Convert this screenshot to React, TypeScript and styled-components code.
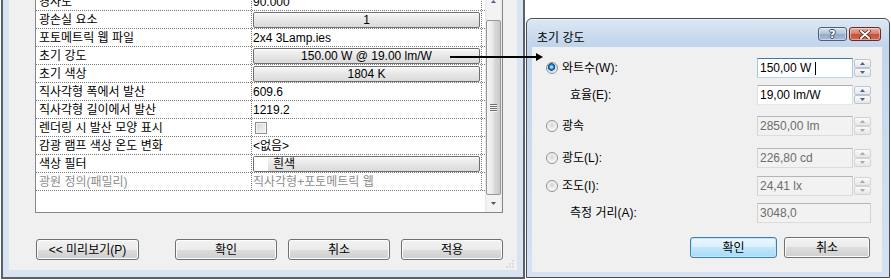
import styled, { createGlobalStyle } from "styled-components";

const GlobalStyle = createGlobalStyle`
  html, body { margin: 0; padding: 0; background: #fff; }
  body {
    font-family: "Liberation Sans", "Noto Sans CJK KR", sans-serif;
    font-size: 12px;
    color: #000;
  }
`;

type Prop = {
  name: string;
  value: string;
  kind?: "text" | "button" | "check" | "color";
  muted?: boolean;
};

const props: Prop[] = [
  { name: "경사도", value: "90.000" },
  { name: "광손실 요소", value: "1", kind: "button" },
  { name: "포토메트릭 웹 파일", value: "2x4 3Lamp.ies" },
  { name: "초기 강도", value: "150.00 W @ 19.00 lm/W", kind: "button" },
  { name: "초기 색상", value: "1804 K", kind: "button" },
  { name: "직사각형 폭에서 발산", value: "609.6" },
  { name: "직사각형 길이에서 발산", value: "1219.2" },
  { name: "렌더링 시 발산 모양 표시", value: "", kind: "check" },
  { name: "감광 램프 색상 온도 변화", value: "<없음>" },
  { name: "색상 필터", value: "흰색", kind: "color" },
  { name: "광원 정의(패밀리)", value: "직사각형+포토메트릭 웹", muted: true },
];

const Stage = styled.div`
  position: relative;
  width: 891px;
  height: 280px;
  overflow: hidden;
  display: flex;
  align-items: flex-start;
`;

/* ---------- main properties window ---------- */

const MainWindow = styled.div`
  flex: none;
  width: 524px;
  margin: -20px 0 0 1px;
  box-sizing: border-box;
  border: 2px solid #5c6067;
  border-top: none;
  padding: 0 6px 7px;
  background: #d8e4f2;
`;

const Panel = styled.div`
  position: relative;
  height: 290px;
  box-sizing: border-box;
  padding: 12px 14px 0 26px;
  background: #f0f0f0;
  display: flex;
  flex-direction: column;
`;

const Grid = styled.div`
  height: 221px;
  box-sizing: border-box;
  border: 1px solid #828790;
  background: #fff;
  display: flex;
`;

const Table = styled.div`
  flex: 1;
  display: flex;
  flex-direction: column;
`;

const Row = styled.div`
  display: grid;
  grid-template-columns: 216px 230px;
  height: 18px;
  box-sizing: border-box;
  border-bottom: 1px dotted #7a7a7a;
`;

const Cell = styled.div<{ $muted?: boolean; $pad: number }>`
  display: flex;
  align-items: center;
  box-sizing: border-box;
  padding: 0 1px 0 ${(p) => p.$pad}px;
  border-right: 1px dotted #7a7a7a;
  color: ${(p) => (p.$muted ? "#8d8d8d" : "#000")};
  line-height: 14px;
  white-space: nowrap;
  overflow: hidden;
`;

const GridButton = styled.div<{ $left?: boolean }>`
  flex: 1;
  height: 16px;
  box-sizing: border-box;
  display: flex;
  align-items: center;
  justify-content: ${(p) => (p.$left ? "flex-start" : "center")};
  border: 1px solid #6f6f6f;
  border-radius: 2px;
  background: linear-gradient(#f6f6f6, #e7e7e7 50%, #dadada);
  box-shadow: inset 0 1px 0 #fff;
  overflow: hidden;
`;

const Swatch = styled.span`
  width: 14px;
  align-self: stretch;
  background: #fff;
  margin-right: 5px;
`;

const Check = styled.span`
  width: 12px;
  height: 12px;
  margin-left: 2px;
  box-sizing: border-box;
  border: 1px solid #8e8f8f;
  background: linear-gradient(135deg, #d5d5d5, #f6f6f6);
  box-shadow: inset 0 0 0 1px #f4f4f4;
`;

const Scrollbar = styled.div`
  width: 17px;
  display: flex;
  flex-direction: column;
  background: linear-gradient(90deg, #e6e6e6, #f3f3f3 15%, #f3f3f3 85%, #e9e9e9);
`;

const ScrollArrow = styled.div`
  height: 17px;
  flex: none;
  display: flex;
  align-items: center;
  justify-content: center;
`;

const Thumb = styled.div`
  margin: 10px 1px 0;
  height: 175px;
  box-sizing: border-box;
  border: 1px solid #979797;
  border-radius: 2px;
  background: linear-gradient(90deg, #f4f4f4, #e9e9e9 45%, #d9d9d9 55%, #cbcbcb);
  display: flex;
  align-items: center;
  justify-content: center;
`;

const Grip = styled.div`
  width: 7px;
  height: 8px;
  background: repeating-linear-gradient(#6f6f6f 0 1px, #f5f5f5 1px 2px);
`;

const ButtonBar = styled.div`
  display: flex;
  gap: 11px;
  margin: 26px 0 0 1px;
`;

const Spacer = styled.div`
  flex: 1;
`;

const WinButton = styled.div<{ $w: number; $default?: boolean }>`
  width: ${(p) => p.$w}px;
  height: 21px;
  box-sizing: border-box;
  display: flex;
  align-items: center;
  justify-content: center;
  border: 1px solid ${(p) => (p.$default ? "#3c7fb1" : "#707070")};
  border-radius: 3px;
  background: ${(p) =>
    p.$default
      ? "linear-gradient(#ebf6fd, #dbf0fc 50%, #bfe6fc 50%, #a9daf5)"
      : "linear-gradient(#f2f2f2, #ebebeb 50%, #dddddd 50%, #cfcfcf)"};
  box-shadow: inset 0 0 0 1px ${(p) => (p.$default ? "#c4e5f6" : "#fbfbfb")};
  line-height: 14px;
`;

const SizeGrip = styled.svg`
  position: absolute;
  right: 2px;
  bottom: 1px;
`;

/* ---------- 초기 강도 dialog ---------- */

const Dialog = styled.div`
  flex: none;
  width: 364px;
  height: 260px;
  margin: 18px 0 0 1px;
  box-sizing: border-box;
  border: 1px solid #4a4e55;
  border-radius: 6px 6px 0 0;
  padding: 0 7px 5px 5px;
  background: linear-gradient(#dce7f4, #c1d5eb 26px, #cbdbee 120px, #d4e2f2);
  box-shadow: inset 0 1px 0 #eef4fb;
  display: flex;
  flex-direction: column;
`;

const TitleBar = styled.div`
  height: 28px;
  display: flex;
  align-items: flex-start;
  padding: 8px 1px 0 5px;
  box-sizing: border-box;
`;

const Title = styled.div`
  flex: 1;
  margin-top: 4px;
  line-height: 14px;
`;

const CaptionButton = styled.div<{ $close?: boolean }>`
  width: ${(p) => (p.$close ? 32 : 29)}px;
  height: 14px;
  box-sizing: border-box;
  margin-left: ${(p) => (p.$close ? 2 : 0)}px;
  border: 1px solid ${(p) => (p.$close ? "#6d2a22" : "#4f5f78")};
  border-radius: 3px;
  background: ${(p) =>
    p.$close
      ? "linear-gradient(#eab1a3, #d9826e 45%, #c6503c 55%, #d06a52)"
      : "linear-gradient(#d3e0ee, #b3c6dc 45%, #93abc8 55%, #a7bcd6)"};
  box-shadow: inset 0 0 0 1px rgba(255, 255, 255, 0.4);
  display: flex;
  align-items: center;
  justify-content: center;
`;

const HelpMark = styled.span`
  color: #fff;
  font: bold 11px/11px "DejaVu Sans", sans-serif;
  text-shadow:
    1px 0 0 #3b4a63,
    -1px 0 0 #3b4a63,
    0 1px 0 #3b4a63,
    0 -1px 0 #3b4a63;
`;

const DialogBody = styled.div`
  flex: 1;
  background: #f0f0f0;
  padding: 0 11px 0 14px;
  display: flex;
  flex-direction: column;
`;

const FieldRow = styled.div<{ $gap: number }>`
  height: 20px;
  margin-top: ${(p) => p.$gap}px;
  display: flex;
  align-items: center;
`;

const Choice = styled.div<{ $indent?: boolean }>`
  flex: 1;
  display: flex;
  align-items: center;
  gap: 4px;
  padding-left: ${(p) => (p.$indent ? 24 : 0)}px;
  line-height: 14px;
`;

const Radio = styled.span<{ $on?: boolean }>`
  width: 12px;
  height: 12px;
  box-sizing: border-box;
  border-radius: 50%;
  border: 1px solid #8e8f8f;
  background: ${(p) =>
    p.$on
      ? "radial-gradient(circle at 45% 40%, #a9dcff 0 1px, #2a8ad4 2px, #0b4a8f 3.5px, #d8d8d8 4px, #f7f7f7 6px)"
      : "radial-gradient(circle at 50% 40%, #d3d3d3 0, #ececec 3px, #fafafa 6px)"};
`;

const InputGroup = styled.div`
  width: 114px;
  height: 20px;
  display: flex;
`;

const TextBox = styled.div<{ $state: "focus" | "normal" | "off" }>`
  flex: 1;
  height: 20px;
  box-sizing: border-box;
  padding: 0 2px;
  display: flex;
  align-items: center;
  line-height: 14px;
  border: 1px solid;
  border-color: ${(p) =>
    p.$state === "focus"
      ? "#3d7bad #a4c9e3 #b7d9ed #a4c9e3"
      : p.$state === "normal"
        ? "#abadb3 #dbdfe6 #e3e9ef #e2e3ea"
        : "#b5b5b5 #d2d2d2 #dcdcdc #d2d2d2"};
  background: ${(p) => (p.$state === "off" ? "#f2f2f2" : "#fff")};
  color: ${(p) => (p.$state === "off" ? "#6d6d6d" : "#000")};
`;

const Caret = styled.span`
  width: 1px;
  height: 13px;
  margin-left: 4px;
  background: #000;
`;

const Spin = styled.div`
  width: 18px;
  display: flex;
  flex-direction: column;
  justify-content: center;
  padding: 1px 0 1px 1px;
  box-sizing: border-box;
`;

const SpinHalf = styled.div<{ $off?: boolean }>`
  height: 9px;
  box-sizing: border-box;
  border: 1px solid ${(p) => (p.$off ? "#d3d3d3" : "#bcc5d2")};
  border-radius: 2px;
  background: linear-gradient(#fafafa, #e6e6e6);
  display: flex;
  align-items: center;
  justify-content: center;
`;

const DialogButtons = styled.div`
  display: flex;
  justify-content: flex-end;
  gap: 7px;
  margin-top: 14px;
  padding-right: 1px;
`;

const Annotation = styled.svg`
  position: absolute;
  left: 449px;
  top: 51px;
`;

function Tri({ up, off }: { up?: boolean; off?: boolean }) {
  return (
    <svg width="5" height="3" viewBox="0 0 5 3">
      <path d={up ? "M0 3 L2.5 0 L5 3 Z" : "M0 0 L5 0 L2.5 3 Z"} fill={off ? "#a8a8a8" : "#4b6286"} />
    </svg>
  );
}

function Spinner({ off }: { off?: boolean }) {
  return (
    <Spin>
      <SpinHalf $off={off}>
        <Tri up off={off} />
      </SpinHalf>
      <SpinHalf $off={off}>
        <Tri off={off} />
      </SpinHalf>
    </Spin>
  );
}

function ValueCell({ p }: { p: Prop }) {
  if (p.kind === "button")
    return (
      <Cell $pad={1}>
        <GridButton>{p.value}</GridButton>
      </Cell>
    );
  if (p.kind === "color")
    return (
      <Cell $pad={1}>
        <GridButton $left>
          <Swatch />
          {p.value}
        </GridButton>
      </Cell>
    );
  if (p.kind === "check")
    return (
      <Cell $pad={1}>
        <Check />
      </Cell>
    );
  return (
    <Cell $pad={1} $muted={p.muted}>
      {p.value}
    </Cell>
  );
}

export default function App() {
  return (
    <Stage>
      <GlobalStyle />
      <MainWindow>
        <Panel>
          <Grid>
            <Table>
              {props.map((p) => (
                <Row key={p.name}>
                  <Cell $pad={3} $muted={p.muted}>
                    {p.name}
                  </Cell>
                  <ValueCell p={p} />
                </Row>
              ))}
            </Table>
            <Scrollbar>
              <ScrollArrow>
                <Tri up />
              </ScrollArrow>
              <Thumb>
                <Grip />
              </Thumb>
              <Spacer />
              <ScrollArrow>
                <svg width="5" height="3" viewBox="0 0 5 3">
                  <path d="M0 0 L5 0 L2.5 3 Z" fill="#555" />
                </svg>
              </ScrollArrow>
            </Scrollbar>
          </Grid>
          <ButtonBar>
            <WinButton $w={103}>&lt;&lt; 미리보기(P)</WinButton>
            <Spacer />
            <WinButton $w={102}>확인</WinButton>
            <WinButton $w={102}>취소</WinButton>
            <WinButton $w={102}>적용</WinButton>
          </ButtonBar>
          <SizeGrip width="9" height="9" viewBox="0 0 9 9">
            {[
              [7, 1],
              [4, 4],
              [7, 4],
              [1, 7],
              [4, 7],
              [7, 7],
            ].map(([x, y]) => (
              <g key={`${x}-${y}`}>
                <rect x={x + 0.5} y={y + 0.5} width="1" height="1" fill="#fff" />
                <rect x={x - 0.5} y={y - 0.5} width="1" height="1" fill="#a0a0a0" />
              </g>
            ))}
          </SizeGrip>
        </Panel>
      </MainWindow>

      <Dialog>
        <TitleBar>
          <Title>초기 강도</Title>
          <CaptionButton>
            <HelpMark>?</HelpMark>
          </CaptionButton>
          <CaptionButton $close>
            <svg width="12" height="9" viewBox="0 0 12 9">
              <path d="M2 1 L10 8 M10 1 L2 8" stroke="#3a1a14" strokeWidth="3.4" strokeLinecap="round" />
              <path d="M2 1 L10 8 M10 1 L2 8" stroke="#fff" strokeWidth="2" strokeLinecap="round" />
            </svg>
          </CaptionButton>
        </TitleBar>
        <DialogBody>
          <FieldRow $gap={11}>
            <Choice>
              <Radio $on />
              와트수(W):
            </Choice>
            <InputGroup>
              <TextBox $state="focus">
                150,00 W<Caret />
              </TextBox>
              <Spinner />
            </InputGroup>
          </FieldRow>
          <FieldRow $gap={7}>
            <Choice $indent>효율(E):</Choice>
            <InputGroup>
              <TextBox $state="normal">19,00 lm/W</TextBox>
              <Spinner />
            </InputGroup>
          </FieldRow>
          <FieldRow $gap={11}>
            <Choice>
              <Radio />
              광속
            </Choice>
            <InputGroup>
              <TextBox $state="off">2850,00 lm</TextBox>
              <Spinner off />
            </InputGroup>
          </FieldRow>
          <FieldRow $gap={12}>
            <Choice>
              <Radio />
              광도(L):
            </Choice>
            <InputGroup>
              <TextBox $state="off">226,80 cd</TextBox>
              <Spinner off />
            </InputGroup>
          </FieldRow>
          <FieldRow $gap={8}>
            <Choice>
              <Radio />
              조도(I):
            </Choice>
            <InputGroup>
              <TextBox $state="off">24,41 lx</TextBox>
              <Spinner off />
            </InputGroup>
          </FieldRow>
          <FieldRow $gap={7}>
            <Choice $indent>측정 거리(A):</Choice>
            <InputGroup>
              <TextBox $state="off">3048,0</TextBox>
            </InputGroup>
          </FieldRow>
          <DialogButtons>
            <WinButton $w={87} $default>
              확인
            </WinButton>
            <WinButton $w={86}>취소</WinButton>
          </DialogButtons>
        </DialogBody>
      </Dialog>

      <Annotation width="96" height="12" viewBox="0 0 96 12">
        <line x1="1" y1="6" x2="88" y2="6" stroke="#000" strokeWidth="2" />
        <path d="M87 2 L94 6 L87 10 Z" fill="#000" />
      </Annotation>
    </Stage>
  );
}
